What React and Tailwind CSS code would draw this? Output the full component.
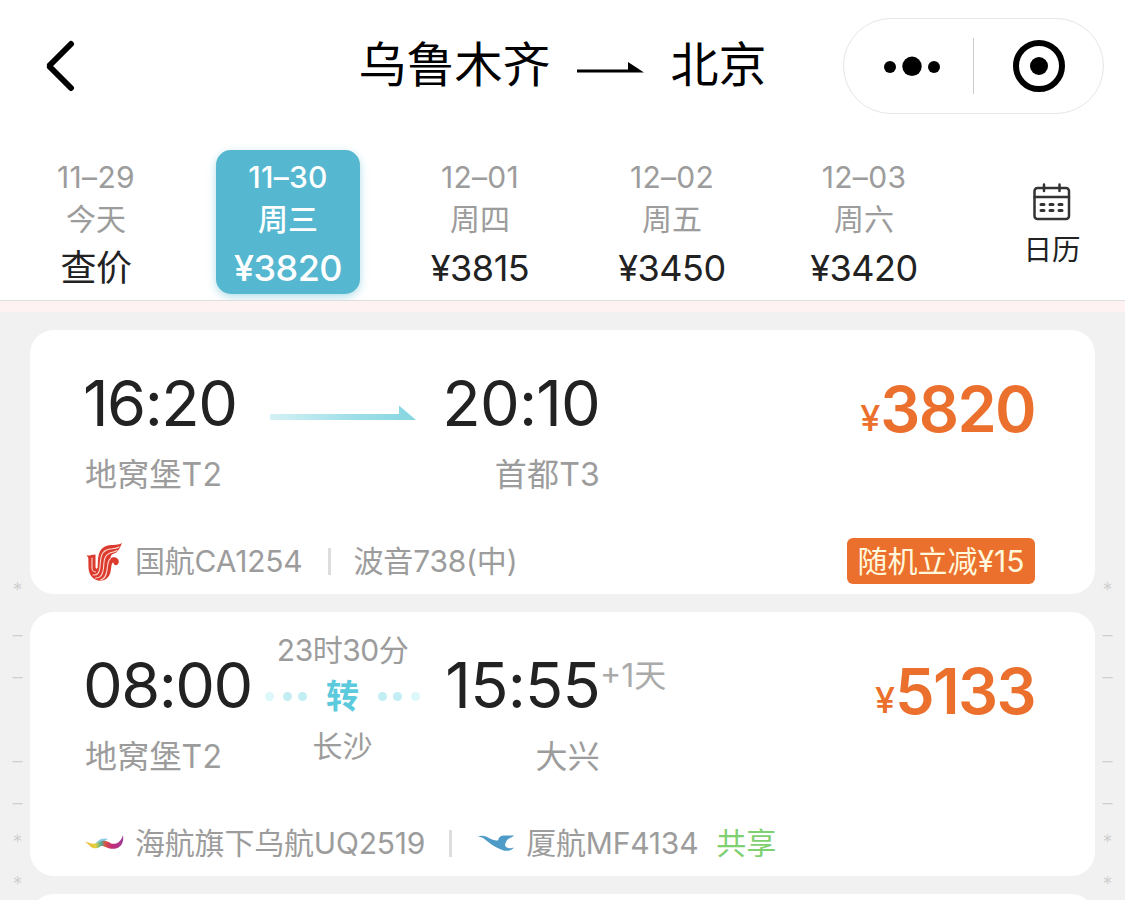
import React, { useState } from 'react';

const days = [
  { date: '11–29', week: '今天', price: '查价' },
  { date: '11–30', week: '周三', price: '¥3820' },
  { date: '12–01', week: '周四', price: '¥3815' },
  { date: '12–02', week: '周五', price: '¥3450' },
  { date: '12–03', week: '周六', price: '¥3420' },
];

const sideMarks = ['*', '–', '–', '', '–', '–', '*', '*'];

const AirChinaLogo = () => (
  <svg className="w-[38px] h-[40px]" viewBox="0 0 38 40" fill="none" strokeLinecap="round" strokeLinejoin="round">
    {/* body of the phoenix */}
    <path
      d="M1.500 14 C4 15.500 6 13.500 10.500 13.500 L10.500 26 C10.800 28.500 12.500 28 12.700 26 C13 16 13 9 20 5.500 C25 3 32 5 37 2 C35 7 33 11.500 29 12.500 C26 13.500 26 15 25.500 17.500 C28 15 34 16 33.800 21 C33 25.500 28.500 25 28.500 21.500 C26 21.500 26.500 27 25.500 31 C24 37 20 40.500 13 39.500 C7 38 4 33 3.500 27 L3.300 17 Z"
      fill="#dc3a2d"
    />
    {/* feather lines */}
    <g stroke="#fbd9d3" strokeWidth="1.100">
      <path d="M8 34 C13 34.500 14.600 31 15 26 C15.500 17 16 11.500 21.500 9 C26 7 30 8.500 34 6" />
      <path d="M10.500 37 C16.500 37.500 18 32 18.500 27 C19 19 19.500 14.500 24 12.500 C27 11 29 11.500 32 9.500" />
      <path d="M15.500 39 C21 37.500 21.800 32 22.300 27 C22.700 22 23 19.500 25.500 17.500" />
      <path d="M7 17 V27 C7 29 8.500 31 10.500 31" />
    </g>
  </svg>
);

const UrumqiAirLogo = () => (
  <svg className="w-[40px] h-[20px]" viewBox="0 0 40 20">
    <defs>
      <linearGradient id="uq" x1="0" x2="1">
        <stop offset="0" stopColor="#f0b93a" />
        <stop offset="0.28" stopColor="#e3cf3c" />
        <stop offset="0.42" stopColor="#4fae9f" />
        <stop offset="0.53" stopColor="#d8553f" />
        <stop offset="0.7" stopColor="#c52a76" />
        <stop offset="1" stopColor="#9b3b96" />
      </linearGradient>
    </defs>
    <path d="M10 11 C14 6 18 4.500 23 6 L18 9 L11 13 Z" fill="#8ccbe8" />
    <path d="M0 8.500 C5 9.500 8 12.500 13 9.500 C18 6.500 22 8 26 10.500 C32 12 36.500 8 38 2 C39 8 37 14 31 15.500 C24 17 20 12.500 16 13 C12 16.500 7 16 4 12 Z" fill="url(#uq)" />
  </svg>
);

const XiamenAirLogo = () => (
  <svg className="w-[40px] h-[20px]" viewBox="0 0 40 20">
    <path
      d="M1 3.500 C5 2 8 3 11 4.500 C15 6.500 18 8 21 7.500 C22 3.500 24 2.500 28 2.500 L37 2.500 C35 5 31 5 29.500 8 C28 11 27 13 30 14.500 C32 16 35 15 37 14.500 C34 18.500 28 18.500 24 16.500 C17 13.500 12 10 8 6.500 C6 4.500 4 4 1 3.500 Z"
      fill="#4f9bc8"
    />
  </svg>
);

const DirectArrow = () => (
  <svg className="w-[146px] h-[15px] mt-[75px]" viewBox="0 0 146 15">
    <defs>
      <linearGradient id="arrow" x1="0" x2="1">
        <stop offset="0" stopColor="#d3f1f5" />
        <stop offset="0.6" stopColor="#9cdee7" />
        <stop offset="1" stopColor="#86d6e0" />
      </linearGradient>
    </defs>
    <path d="M0 9 H129 V0.500 L146 15 H0 Z" fill="url(#arrow)" />
  </svg>
);

const Transfer = ({ duration, city }) => (
  <div className="w-[156px] pt-[18px] flex flex-col items-center text-[30px] text-[#9c9c9c]">
    <div className="h-10 leading-10 whitespace-nowrap tracking-[-0.5px]">{duration}</div>
    <div className="h-[52px] w-full flex items-center justify-between">
      <div className="flex items-center">
        <i className="size-[9px] rounded-full bg-[#dcf8fb]" />
        <i className="size-[9px] rounded-full bg-[#c2eef3] ml-[9px]" />
        <i className="size-[9px] rounded-full bg-[#c2eef3] ml-[6px]" />
      </div>
      <b className="text-[33px] leading-[52px] font-bold text-[#5bcadc]">转</b>
      <div className="flex items-center">
        <i className="size-[9px] rounded-full bg-[#c2eef3]" />
        <i className="size-[9px] rounded-full bg-[#c2eef3] ml-[6px]" />
        <i className="size-[9px] rounded-full bg-[#dcf8fb] ml-[9px]" />
      </div>
    </div>
    <div className="h-[48px] leading-[48px]">{city}</div>
  </div>
);

const FlightCard = ({ dep, depAirport, arr, arrAirport, nextDay, middle, price, children }) => (
  <div className="h-[264px] shrink-0 bg-white rounded-[24px] pl-[55px] pr-[60px] flex flex-col">
    <div className="h-[208px] flex justify-between">
      <div className="grid grid-cols-[180px_155px_180px]">
        <div className="pt-[41px] whitespace-nowrap">
          <div className="ml-[-2px] text-[63px] leading-[65px] tracking-[-1.5px] text-[#222]">{dep}</div>
          <div className="mt-[19px] text-[32px] leading-[40px] tracking-[0.2px] text-[#9c9c9c]">{depAirport}</div>
        </div>
        <div className="flex justify-center">{middle}</div>
        <div className="pt-[41px] text-right whitespace-nowrap relative">
          <div className="text-[63px] leading-[65px] tracking-[-0.8px] text-[#222]">{arr}</div>
          <div className="mt-[19px] text-[32px] leading-[40px] tracking-[0.2px] text-[#9c9c9c]">{arrAirport}</div>
          {nextDay && (
            <span className="absolute left-full top-[44px] text-[32px] leading-[40px] text-[#aaa]">{nextDay}</span>
          )}
        </div>
      </div>
      <div className="pt-[46px] text-[#ec702d] leading-[66px] whitespace-nowrap flex">
        <span className="text-[36px] font-medium pt-[9px]">¥</span>
        <span className="text-[63px] font-[580] tracking-[-1.6px]">{price}</span>
      </div>
    </div>
    <div className="h-[46px] flex items-center text-[30px] tracking-[-0.2px] text-[#9c9c9c] whitespace-nowrap">{children}</div>
  </div>
);

const SideMarks = () => (
  <div className="pt-[260px] flex flex-col items-center text-[20px] font-light text-[#cfcfcf]">
    {sideMarks.map((m, i) => (
      <span key={i} className={`h-[42px] shrink-0 ${m === '*' ? 'leading-[37px]' : 'leading-[42px]'}`}>{m}</span>
    ))}
  </div>
);

const App = () => {
  const [active, setActive] = useState(1);

  return (
    <div className="w-[1125px] h-[900px] overflow-hidden flex flex-col bg-[#f1f1f1] font-['Inter','Noto_Sans_CJK_SC',sans-serif]">
      <div className="h-[300px] shrink-0 bg-white">
        {/* Title bar */}
        <div className="h-[132px] px-[21px] grid grid-cols-[1fr_auto_1fr] items-center">
          <svg className="w-[32px] h-[54px] ml-[22px]" viewBox="0 0 32 54" fill="none" stroke="#000" strokeWidth="6" strokeLinecap="round">
            <path d="M28 5 L6 27 L28 49" strokeLinejoin="bevel" />
          </svg>
          <div className="flex items-center text-[48px] leading-[60px] text-black pb-[3px]">
            <span>乌鲁木齐</span>
            <svg className="w-[68px] h-[12px] mx-[26px] mt-[7px]" viewBox="0 0 68 12">
              <path d="M0 7.500 H51 V0 L67 10.500 H0 Z" />
            </svg>
            <span>北京</span>
          </div>
          <div className="justify-self-end w-[261px] h-[96px] rounded-full border border-[#e6e6e6] flex items-center">
            <svg className="w-[129px] h-[30px]" viewBox="0 0 129 30">
              <circle cx="46" cy="16" r="6" />
              <circle cx="68" cy="15.300" r="9.700" />
              <circle cx="90" cy="16" r="6" />
            </svg>
            <div className="w-px h-[56px] bg-[#ccc]" />
            <svg className="w-[54px] h-[54px] ml-[38px]" viewBox="0 0 54 54">
              <circle cx="27" cy="27" r="23" fill="none" stroke="#000" strokeWidth="6" />
              <circle cx="27" cy="27" r="9" />
            </svg>
          </div>
        </div>

        {/* Date strip */}
        <div className="pt-[18px] flex">
          {days.map((d, i) => (
            <div key={d.date} className="w-[192px] flex justify-center">
              <button
                onClick={() => setActive(i)}
                className={`w-[144px] h-[144px] pt-[6px] rounded-[15px] flex flex-col items-center whitespace-nowrap ${
                  i === active ? 'bg-[#55b7d0] text-white font-medium shadow-[0_3px_8px_rgba(85,183,208,0.45)]' : 'text-[#9c9c9c]'
                }`}
              >
                <span className="text-[30px] leading-[43px] tracking-[0.3px]">{d.date}</span>
                <span className="text-[30px] leading-[41px]">{d.week}</span>
                <span className={`text-[36px] leading-[56px] tracking-[-0.5px] ${i === active ? '' : 'text-[#222]'}`}>{d.price}</span>
              </button>
            </div>
          ))}
          <div className="w-[165px] pl-[19px] pt-[33px] flex flex-col items-center text-[#222]">
            <svg className="w-[38px] h-[38px]" viewBox="0 0 38 38" fill="none" stroke="#333" strokeWidth="2.500" strokeLinecap="round">
              <rect x="1.500" y="5" width="34.500" height="31" rx="3" />
              <path d="M1.500 14 H36 M11 1.500 V8 M26.500 1.500 V8" />
              <path d="M8 21.500 H11 M17 21.500 H20 M26 21.500 H29 M8 27.500 H11 M17 27.500 H20 M26 27.500 H29" strokeWidth="3" />
            </svg>
            <span className="mt-[9px] text-[28.5px] leading-[40px]">日历</span>
          </div>
        </div>
      </div>
      <div className="h-[12px] shrink-0 border-t border-[#ddd] bg-[#fff2f2]" />

      {/* Flight list */}
      <div className="h-[588px] grid grid-cols-[30px_1065px_30px] overflow-hidden">
        <div className="pl-[5px]"><SideMarks /></div>
        <div className="pt-[18px] flex flex-col gap-[18px]">
          <FlightCard
            dep="16:20"
            depAirport="地窝堡T2"
            arr="20:10"
            arrAirport="首都T3"
            price="3820"
            middle={<DirectArrow />}
          >
            <AirChinaLogo />
            <span className="ml-[12px]">国航CA1254</span>
            <i className="w-[3px] h-[27px] bg-[#ddd] ml-[25px] mr-[23px]" />
            <span>波音738(中)</span>
            <span className="ml-auto w-[188px] h-[46px] rounded-[6px] bg-[#ec702d] text-[#fff8dc] tracking-normal text-center leading-[46px]">
              随机立减¥15
            </span>
          </FlightCard>
          <FlightCard
            dep="08:00"
            depAirport="地窝堡T2"
            arr="15:55"
            arrAirport="大兴"
            nextDay="+1天"
            price="5133"
            middle={<Transfer duration="23时30分" city="长沙" />}
          >
            <UrumqiAirLogo />
            <span className="ml-[10px]">海航旗下乌航UQ2519</span>
            <i className="w-[3px] h-[27px] bg-[#ddd] ml-[24px] mr-[25px]" />
            <XiamenAirLogo />
            <span className="ml-[9px]">厦航MF4134</span>
            <span className="ml-[18px] text-[#7fd070]">共享</span>
          </FlightCard>
          <div className="h-[264px] shrink-0 bg-white rounded-[24px]" />
        </div>
        <div className="pr-[5px]"><SideMarks /></div>
      </div>
    </div>
  );
};

export default App;
